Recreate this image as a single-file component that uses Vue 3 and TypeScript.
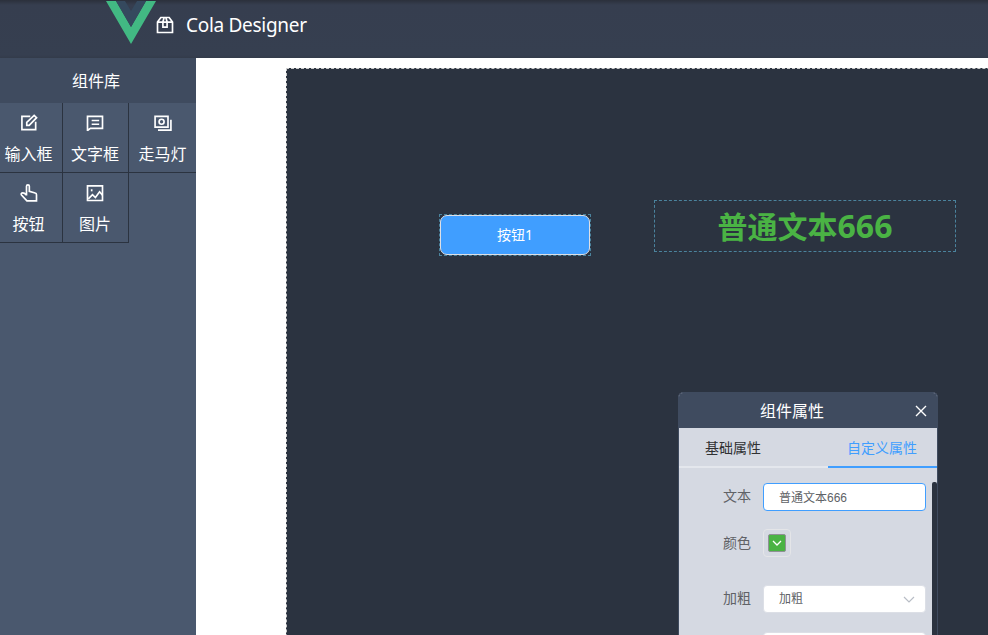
<script setup lang="ts">
import { ref } from 'vue'

interface Widget {
  name: string
  paths: string[]
}

const widgets: Widget[] = [
  { name: '输入框', paths: ['M13.500 4H3.500v16H20v-9.500', 'M9.300 14.800v-3.500l8.900-8.500 2.900 2.800-8.900 9.200z'] },
  { name: '文字框', paths: ['M3 21.500V4h18v14.500H6.500L3 21', 'M8 9h9M8 13.500h9'] },
  { name: '走马灯', paths: ['M2.500 4H18v13H2.500z', 'M21.500 8v12.500H6', 'M10.300 7.500a3 3 0 1 0 0 6 3 3 0 0 0 0-6z'] },
  { name: '按钮', paths: ['M9 15V4a1.700 1.700 0 0 1 3.400 0V10l7 2q1.600.4 1.600 2V21.500H9.500l-6.500-7q-1-1.500.5-2.400Q6 11.300 9 14.500'] },
  { name: '图片', paths: ['M3 3.500h18v17.500H3z', 'M4 19l5-5 3.500 3.500 5-7 3.500 4', 'M8 7.500v2.500'] },
]

const textValue = ref<string>('普通文本666')
</script>

<template>
  <div class="designer">
    <header class="topbar">
      <svg class="vue-logo" viewBox="0 0 50 43">
        <path d="M0 0H10L25 26L40 0H50L25 43Z" fill="#42b983" />
        <path d="M10 0H19L25 10L31 0H40L25 26Z" fill="#35495e" />
      </svg>
      <svg class="box-icon line" viewBox="0 0 24 24">
        <path d="M3 8.500l4-5.500h10l4 5.500V21H3zM3 8.500h18M9.500 8v6.500h5V8l-1.500-5h-2z" />
      </svg>
      <span class="brand">Cola Designer</span>
    </header>
    <div class="workspace">
      <aside class="library">
        <div class="library-title">组件库</div>
        <div class="widgets">
          <div v-for="w in widgets" :key="w.name" class="widget">
            <svg class="line widget-icon" viewBox="0 0 24 24">
              <path v-for="p in w.paths" :key="p" :d="p" />
            </svg>
            <span>{{ w.name }}</span>
          </div>
        </div>
      </aside>
      <main class="stage">
        <div class="canvas">
          <div class="node button-node"><div class="demo-button">按钮1</div></div>
          <div class="node text-node">普通文本<span class="digits">666</span></div>
        </div>
      </main>
    </div>
    <section class="panel">
      <div class="panel-head">
        <span>组件属性</span>
        <svg class="close" viewBox="0 0 12 12"><path d="M1 1l10 10M11 1L1 11" /></svg>
      </div>
      <div class="tabs">
        <div class="tab">基础属性</div>
        <div class="tab active">自定义属性</div>
      </div>
      <div class="scroll">
        <div class="form">
          <div class="field text-field">
            <label>文本</label>
            <input v-model="textValue" class="control focused" type="text" />
          </div>
          <div class="field colour-field">
            <label>颜色</label>
            <div class="picker">
              <div class="swatch">
                <svg viewBox="0 0 10 6"><path d="M1 1l4 4 4-4" /></svg>
              </div>
            </div>
          </div>
          <div class="field weight-field">
            <label>加粗</label>
            <div class="control select">
              <span>加粗</span>
              <svg viewBox="0 0 12 7"><path d="M1 1l5 5 5-5" /></svg>
            </div>
          </div>
          <div class="field last"><label></label><div class="control select"></div></div>
        </div>
        <div class="thumb"></div>
      </div>
    </section>
  </div>
</template>

<style>
body {
  margin: 0;
  overflow: hidden;
}
</style>

<style scoped>
* {
  box-sizing: border-box;
}
.designer {
  position: relative;
  display: flex;
  flex-direction: column;
  width: 988px;
  height: 635px;
  overflow: hidden;
  background: #fff;
  font-family: "Noto Sans", "Noto Sans CJK SC", sans-serif;
  color: #fff;
}
.line {
  fill: none;
  stroke: currentColor;
  stroke-width: 2;
  stroke-linejoin: miter;
}
.topbar {
  display: flex;
  flex: none;
  height: 58px;
  padding-left: 106px;
  background: linear-gradient(#2b303b, #363e4f 5px, #363f50 55px, #333b4a);
}
.vue-logo {
  width: 50px;
  height: 43px;
  margin-top: 1px;
}
.box-icon {
  width: 20px;
  height: 20px;
  margin: 15px 0 0 -1px;
}
.brand {
  margin-left: 11px;
  font-size: 19px;
  letter-spacing: -0.3px;
  line-height: 50px;
  white-space: nowrap;
}
.workspace {
  display: flex;
  flex: 1;
  min-height: 0;
}
.library {
  width: 196px;
  flex: none;
  background: #4a586e;
}
.library-title {
  height: 45px;
  padding-right: 4px;
  background: #3f4b5f;
  font-size: 16px;
  line-height: 46px;
  text-align: center;
}
.widgets {
  display: grid;
  grid-template-columns: 63px 66px 67px;
  grid-auto-rows: 70px;
}
.widget {
  display: flex;
  flex-direction: column;
  align-items: center;
  padding: 10px 0 0;
  border-right: 1px solid #2b3340;
  border-bottom: 1px solid #2b3340;
  font-size: 16px;
  line-height: 24px;
  white-space: nowrap;
}
.widget:first-child,
.widget:nth-child(4) {
  padding-right: 5px;
}
.widget:nth-child(2),
.widget:nth-child(5) {
  padding-right: 1px;
}
.widget:nth-child(3) {
  border-right: 0;
}
.widget-icon {
  width: 20px;
  height: 20px;
  margin-bottom: 9px;
}
.stage {
  flex: 1;
  padding: 10px 0 0 90px;
}
.canvas {
  position: relative;
  width: 1000px;
  height: 800px;
  border: 1px dashed #ccc;
  background: #2b3340;
}
.node {
  position: absolute;
  border: 1px dashed #4b839d;
}
.button-node {
  left: 152px;
  top: 145px;
  width: 152px;
  height: 42px;
}
.demo-button {
  height: 40px;
  border: 1px solid #dcdfe6;
  border-radius: 7px;
  background: #409eff;
  font-size: 14px;
  line-height: 38px;
  text-align: center;
}
.text-node {
  left: 367px;
  top: 131px;
  width: 302px;
  height: 52px;
  color: #4ab344;
  font-size: 30px;
  font-weight: 700;
  line-height: 50px;
  text-align: center;
}
.digits {
  font-size: 32px;
}
.panel {
  position: absolute;
  left: 678px;
  top: 392px;
  width: 260px;
  height: 300px;
  border: 1px solid #3f4b5f;
  border-radius: 5px;
  overflow: hidden;
  background: #d5d9e2;
}
.panel-head {
  display: flex;
  align-items: center;
  height: 35px;
  padding: 0 10px 0 81px;
  background: #3f4b5f;
  font-size: 16px;
}
.panel-head span {
  padding-bottom: 2px;
}
.close {
  width: 12px;
  height: 12px;
  margin-left: auto;
  fill: none;
  stroke: #fff;
  stroke-width: 1.4;
}
.tabs {
  display: flex;
  height: 40px;
  color: #303133;
  font-size: 14px;
  line-height: 40px;
}
.tab {
  width: 149px;
  padding-left: 26px;
  border-bottom: 2px solid #e4e7ed;
}
.tab.active {
  width: 109px;
  padding-left: 19px;
  border-color: #409eff;
  color: #409eff;
}
.scroll {
  display: flex;
  padding-top: 14px;
}
.form {
  width: 253px;
  padding-top: 1px;
}
.field {
  display: flex;
  height: 28px;
  margin-bottom: 18px;
  color: #606266;
  font-size: 14px;
  line-height: 27px;
}
.field label {
  width: 72px;
  margin-right: 12px;
  text-align: right;
}
.text-field label,
.weight-field label {
  line-height: 25px;
}
.control {
  width: 163px;
  height: 28px;
  padding: 0 15px;
  border: 1px solid #dcdfe6;
  border-radius: 4px;
  outline: none;
  background: #fff;
  color: #606266;
  font-family: "Liberation Sans", "Noto Sans CJK SC", sans-serif;
  font-size: 12px;
}
.focused {
  padding-bottom: 2px;
  border-color: #409eff;
}
.colour-field {
  margin-bottom: 28px;
}
.picker {
  width: 28px;
  height: 28px;
  padding: 4px;
  border: 1px solid #e4e5e8;
  border-radius: 4px;
}
.swatch {
  display: flex;
  align-items: center;
  justify-content: center;
  height: 18px;
  border: 1px solid #8f9195;
  border-radius: 2px;
  background: #4ab344;
}
.swatch svg {
  width: 10px;
  height: 6px;
  margin-bottom: 1px;
  fill: none;
  stroke: #fff;
  stroke-width: 1.3;
}
.select {
  display: flex;
  align-items: center;
  justify-content: space-between;
  padding-right: 10px;
}
.select svg {
  width: 12px;
  height: 7px;
  fill: none;
  stroke: #b8bdc6;
  stroke-width: 1.2;
}
.last {
  margin-top: 19px;
}
.thumb {
  width: 5px;
  height: 220px;
  border-radius: 2px 2px 0 0;
  background: #2b3340;
}
</style>
